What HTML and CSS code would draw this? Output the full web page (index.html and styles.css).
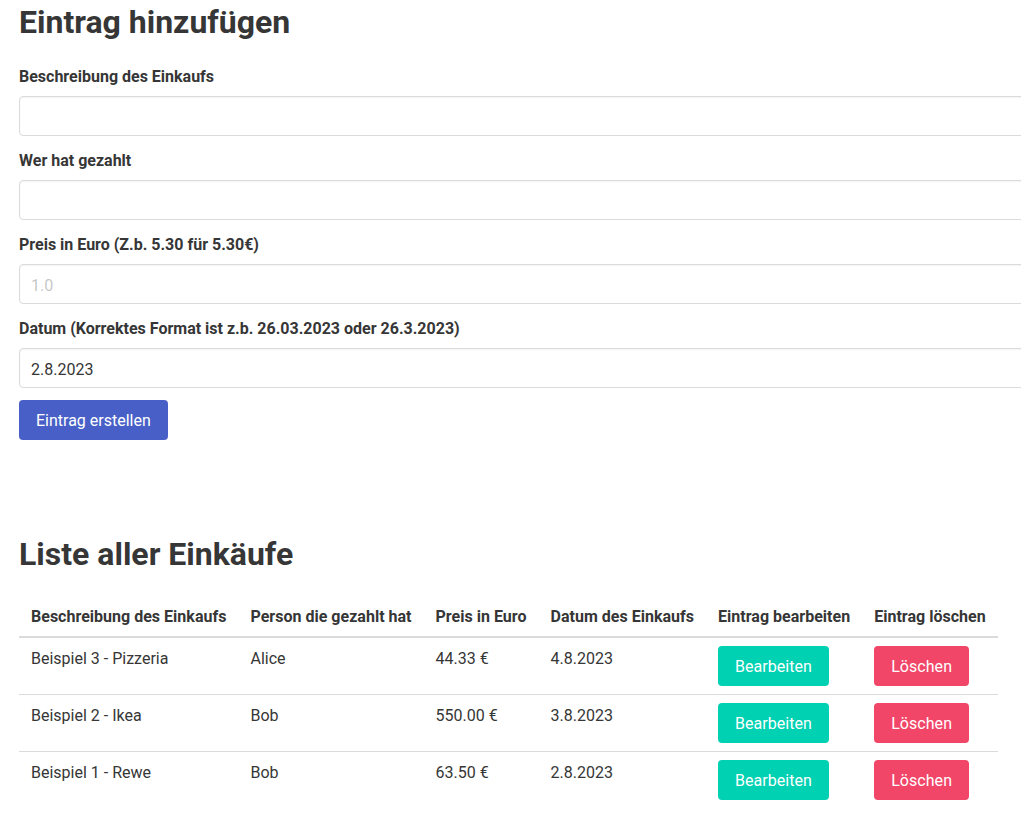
FILE: index.html
```html
<!DOCTYPE html>
<html lang="de">
<head>
<meta charset="utf-8">
<title>Einkäufe</title>
<link rel="stylesheet" href="styles.css">
</head>
<body>
<main class="page">
  <section class="form-section">
    <h1 class="title">Eintrag hinzufügen</h1>
    <div class="field">
      <label class="label">Beschreibung des Einkaufs</label>
      <input class="input" type="text">
    </div>
    <div class="field">
      <label class="label">Wer hat gezahlt</label>
      <input class="input" type="text">
    </div>
    <div class="field">
      <label class="label">Preis in Euro (Z.b. 5.30 für 5.30€)</label>
      <input class="input" type="text" placeholder="1.0">
    </div>
    <div class="field">
      <label class="label">Datum (Korrektes Format ist z.b. 26.03.2023 oder 26.3.2023)</label>
      <input class="input" type="text" value="2.8.2023">
    </div>
    <div class="field">
      <button class="button is-link">Eintrag erstellen</button>
    </div>
  </section>

  <section class="list-section">
    <h1 class="title">Liste aller Einkäufe</h1>
    <table class="table">
      <thead>
        <tr>
          <th>Beschreibung des Einkaufs</th>
          <th>Person die gezahlt hat</th>
          <th>Preis in Euro</th>
          <th>Datum des Einkaufs</th>
          <th>Eintrag bearbeiten</th>
          <th>Eintrag löschen</th>
        </tr>
      </thead>
      <tbody>
        <tr>
          <td>Beispiel 3 - Pizzeria</td>
          <td>Alice</td>
          <td>44.33 €</td>
          <td>4.8.2023</td>
          <td><button class="button is-primary">Bearbeiten</button></td>
          <td><button class="button is-danger">Löschen</button></td>
        </tr>
        <tr>
          <td>Beispiel 2 - Ikea</td>
          <td>Bob</td>
          <td>550.00 €</td>
          <td>3.8.2023</td>
          <td><button class="button is-primary">Bearbeiten</button></td>
          <td><button class="button is-danger">Löschen</button></td>
        </tr>
        <tr>
          <td>Beispiel 1 - Rewe</td>
          <td>Bob</td>
          <td>63.50 €</td>
          <td>2.8.2023</td>
          <td><button class="button is-primary">Bearbeiten</button></td>
          <td><button class="button is-danger">Löschen</button></td>
        </tr>
      </tbody>
    </table>
  </section>
</main>
</body>
</html>
```

FILE: styles.css
```css
html, body {
  margin: 0;
  padding: 0;
  overflow-x: hidden;
  background: #fff;
}

body {
  font-family: Roboto, "Liberation Sans", sans-serif;
  font-size: 16px;
  line-height: 1.5;
  color: #4a4a4a;
}

.page {
  padding: 4px 19px 24px;
}

.title {
  margin: 0 0 24px;
  padding-top: 1px;
  height: 36px;
  box-sizing: border-box;
  font-size: 32px;
  font-weight: 700;
  line-height: 35px;
  color: #363636;
}

.form-section {
  width: 1060px;
}

.field {
  margin-bottom: 12px;
}

.label {
  display: block;
  margin-bottom: 7px;
  padding-top: 1px;
  font-size: 16px;
  font-weight: 700;
  color: #363636;
}

.input {
  box-sizing: border-box;
  display: block;
  width: 100%;
  height: 40px;
  padding: 8px 11px 6px;
  font-family: inherit;
  font-size: 16px;
  line-height: 1.5;
  color: #363636;
  background: #fff;
  border: 1px solid #dbdbdb;
  border-radius: 4px;
  box-shadow: inset 0 1px 2px rgba(10, 10, 10, 0.05);
  outline: none;
}

.input::placeholder {
  color: rgba(54, 54, 54, 0.3);
}

.button {
  box-sizing: border-box;
  height: 40px;
  padding: 8px 16px 6px;
  font-family: inherit;
  font-size: 16px;
  line-height: 1.5;
  color: #fff;
  border: 1px solid transparent;
  border-radius: 4px;
  cursor: pointer;
}

.is-link { background: #485fc7; }
.is-primary { background: #00d1b2; letter-spacing: 0.05px; }
.is-danger { background: #f14668; letter-spacing: 0.05px; }

.list-section {
  margin-top: 96px;
}

.table {
  border-collapse: collapse;
  border-spacing: 0;
  color: #363636;
}

.table th,
.table td {
  padding: 9px 12px 7px;
  text-align: left;
  vertical-align: top;
  border: 0 solid #dbdbdb;
  border-bottom-width: 1px;
}

.table td:nth-child(5),
.table td:nth-child(6) {
  padding-top: 8px;
  padding-bottom: 8px;
}

.table th {
  font-weight: 700;
  color: #363636;
  letter-spacing: 0.015px;
  border-bottom-width: 2px;
}

.table tbody tr:last-child td {
  border-bottom-width: 0;
}
```
